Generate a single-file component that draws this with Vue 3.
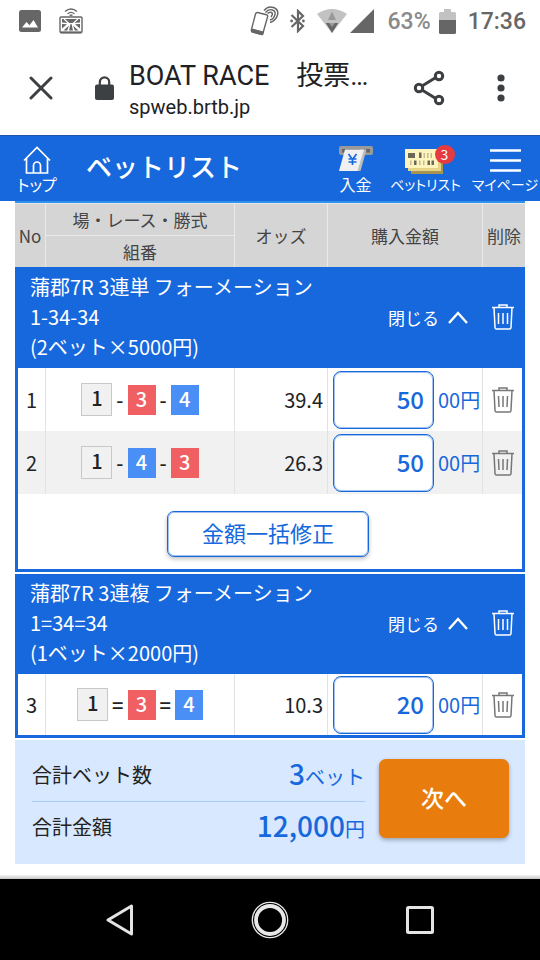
<script setup>
import { ref, computed } from 'vue'

const groups = ref([
  {
    id: 'g1',
    title: '蒲郡7R 3連単 フォーメーション',
    pattern: '1-34-34',
    summary: '(2ベット×5000円)',
    separator: '-',
    bulkEdit: true,
    open: true,
    bets: [
      { no: 1, boats: [1, 3, 4], odds: '39.4', amount: '50' },
      { no: 2, boats: [1, 4, 3], odds: '26.3', amount: '50' },
    ],
  },
  {
    id: 'g2',
    title: '蒲郡7R 3連複 フォーメーション',
    pattern: '1=34=34',
    summary: '(1ベット×2000円)',
    separator: '=',
    bulkEdit: false,
    open: true,
    bets: [{ no: 3, boats: [1, 3, 4], odds: '10.3', amount: '20' }],
  },
])

const allBets = computed(() => groups.value.flatMap((g) => g.bets))
const betCount = computed(() => allBets.value.length)
const total = computed(() =>
  allBets.value.reduce((sum, b) => sum + (Number(b.amount) || 0) * 100, 0).toLocaleString('en-US')
)

function removeGroup(id) {
  groups.value = groups.value.filter((g) => g.id !== id)
}

function removeBet(group, no) {
  group.bets = group.bets.filter((b) => b.no !== no)
}
</script>

<template>
  <div class="screen">
    <div class="status">
      <div class="status-left">
        <svg width="22" height="22" viewBox="0 0 22 22">
          <rect width="22" height="22" rx="2.500" fill="#666" />
          <path d="M3 17.500L7.500 12l3 3.200L14.500 10 19 17.500z" fill="#fff" />
        </svg>
        <svg width="24" height="26" viewBox="0 0 24 26" fill="none" stroke="#666">
          <path d="M6 3.500Q12-1.500 18 3.500M8.500 5.700Q12 3 15.500 5.700" stroke-width="1.400" />
          <path d="M10.500 7.200h3" stroke-width="1.400" />
          <rect x="1" y="9" width="22" height="15.500" rx="1" stroke-width="1.400" />
          <path d="M3 11h18v3.500L14.500 15h-5L3 14.500z" fill="#666" stroke="none" />
          <path d="M3 16l5 .3L3 20.500zM21 16l-5 .3 5 4.200zM11.500 16h1l1.500 6.500h-4zM4.500 22.500l5.500-5-1.800 5zM19.500 22.500l-5.500-5 1.800 5z" fill="#666" stroke="none" />
          <path d="M5 11l5 4.500M19 11l-5 4.500" stroke="#fff" stroke-width="1.100" />
          <path d="M1.500 24.500h21" stroke-width="2" />
        </svg>
      </div>
      <div class="status-right">
        <svg width="29" height="32" viewBox="0 0 29 32" fill="none" stroke="#666">
          <path d="M7.500 7.500l9 2.200q1.500.5 1.100 2L13 28q-.5 1.500-2 1.100l-8.500-2.200q-1.500-.5-1.100-2L5.500 9q.5-1.700 2-1.500z" stroke-width="1.400" />
          <path d="M2 24l11.500 3-1 3-11-3z" fill="#666" />
          <path d="M14 5.500Q18 .5 23.500 2.500T27.500 10 20 17.500M15.500 7.500Q18.500 3.500 22.500 5T24.500 11 20 14.500M17.500 8.500Q19.500 6.500 21.500 7.500T21 12" stroke-width="1.400" />
        </svg>
        <svg class="i-bt" width="15" height="24" viewBox="0 0 15 24" fill="none" stroke="#666" stroke-width="2.200">
          <path d="M1.500 6L13 17l-5 5V2l5 5L1.500 18" />
          <circle cx="1.600" cy="12" r="1.400" fill="#666" stroke="none" />
          <circle cx="13.400" cy="12" r="1.400" fill="#666" stroke="none" />
        </svg>
        <svg class="i-wifi" width="30" height="24" viewBox="0 0 30 24">
          <path d="M0 5Q15-5 30 5L15 24z" fill="#c2c2c2" />
          <path d="M8.800 14h12.400L15 24z" fill="#666" />
          <path d="M15 2.500l4 8.500h-8z" fill="#999" />
          <path d="M12 14h6l-3 4z" fill="#999" />
        </svg>
        <svg class="i-signal" width="24" height="24" viewBox="0 0 24 24"><path d="M24 0v24H0z" fill="#666" /></svg>
        <span class="percent">63%</span>
        <svg width="17" height="25" viewBox="0 0 17 25">
          <path d="M5 0h7v3h3.500q1.500 0 1.500 1.500V12H0V4.500Q0 3 1.500 3H5z" fill="#c2c2c2" />
          <path d="M0 11h17v12.500q0 1.500-1.500 1.500h-14Q0 25 0 23.500z" fill="#666" />
        </svg>
        <span class="clock">17:36</span>
      </div>
    </div>

    <div class="browser">
      <button class="plain" aria-label="閉じる">
        <svg width="24" height="24" viewBox="0 0 24 24" stroke="#3c4043" stroke-width="3" stroke-linecap="round"><path d="M2 2l20 20M22 2L2 22" /></svg>
      </button>
      <svg class="lock" width="19" height="24" viewBox="0 0 19 24">
        <path d="M4.800 10V6a4.700 4.700 0 0 1 9.400 0v4" fill="none" stroke="#3c4043" stroke-width="2.200" />
        <rect y="8.500" width="19" height="15.500" rx="2" fill="#3c4043" />
      </svg>
      <div class="page-id">
        <div class="page-title">BOAT RACE　投票…</div>
        <div class="page-url">spweb.brtb.jp</div>
      </div>
      <button class="plain share" aria-label="共有">
        <svg width="32" height="36" viewBox="0 0 32 36" fill="none" stroke="#3c4043" stroke-width="3">
          <path d="M9 16L22 8M9 20l13 8" />
          <circle cx="6" cy="18" r="3.700" /><circle cx="26" cy="6" r="3.700" /><circle cx="26" cy="30" r="3.700" />
        </svg>
      </button>
      <button class="plain" aria-label="メニュー">
        <svg width="8" height="28" viewBox="0 0 8 28" fill="#3c4043">
          <circle cx="4" cy="4" r="3.600" /><circle cx="4" cy="14" r="3.600" /><circle cx="4" cy="24" r="3.600" />
        </svg>
      </button>
    </div>

    <header class="app-bar">
      <a class="nav-item home" href="#top">
        <svg width="28" height="28" viewBox="0 0 28 28" fill="none" stroke="#fff" stroke-width="1.700">
          <path d="M1 14.500L14 1.500l13 13M3.500 12.500V27h21V12.500M10.500 27v-7.500a3.500 3.500 0 0 1 7 0V27" />
        </svg>
        <span>トップ</span>
      </a>
      <h1>ベットリスト</h1>
      <a class="nav-item deposit" href="#deposit">
        <svg width="34" height="28" viewBox="0 0 34 28">
          <rect width="34" height="9" rx="2" fill="#9a9a9a" />
          <rect x="3" y="3" width="28" height="3.500" fill="#666" />
          <path d="M21 3.500h6.500L21.500 25h-5z" fill="#bdbdbd" />
          <path d="M6 3.500h19L18.500 25H0z" fill="#f0f0f0" />
          <path d="M9.500 8l4 5.500 4-5.500M13.500 13.500V19M9.500 13h8M9.500 16h8" stroke="#1768dc" stroke-width="1.700" fill="none" />
        </svg>
        <span>入金</span>
      </a>
      <a class="nav-item small bets" href="#bets">
        <span class="bets-icon">
          <svg width="38" height="25" viewBox="0 0 38 25">
            <path d="M6 3h32v22H6z" fill="#a9954f" />
            <path d="M3 2h33v20H3z" fill="#e5d387" />
            <path d="M0 0h33v19H0z" fill="#fff4bd" />
            <g fill="#6b675b">
              <path d="M3 4h7v5H3zM14 3.500h2.500v5.500H14zM9 11.500h2.500v4.500H9zM22.500 11.500H25v4.500h-2.500zM26.500 11.500H29v4.500h-2.500z" />
              <path d="M18.500 4h1.500v5h-1.500zM22 4h1.500v5H22zM25.500 4H27v5h-1.500zM5 11.500h1.500v4.500H5zM14 11.500h1.500v4.500H14zM18 11.500h1.500v4.500H18z" opacity=".4" />
            </g>
          </svg>
          <span class="badge">{{ betCount }}</span>
        </span>
        <span>ベットリスト</span>
      </a>
      <a class="nav-item small mypage" href="#mypage">
        <svg width="31" height="28" viewBox="0 0 31 28" stroke="#fff" stroke-width="2.400"><path d="M0 4.500h31M0 14.500h31M0 24.500h31" /></svg>
        <span>マイページ</span>
      </a>
    </header>

    <main>
      <table class="head">
        <colgroup><col class="c-no-head" /><col /><col class="c-odds" /><col class="c-amount" /><col class="c-del-head" /></colgroup>
        <thead>
          <tr>
            <th rowspan="2">No</th>
            <th>場・レース・勝式</th>
            <th rowspan="2">オッズ</th>
            <th rowspan="2">購入金額</th>
            <th rowspan="2">削除</th>
          </tr>
          <tr><th class="sub">組番</th></tr>
        </thead>
      </table>

      <section v-for="group in groups" :key="group.id" class="group" :class="{ short: !group.bulkEdit }">
        <div class="group-head">
          <h2>{{ group.title }}<br />{{ group.pattern }}<br />{{ group.summary }}</h2>
          <button class="plain toggle" @click="group.open = !group.open">
            <span>{{ group.open ? '閉じる' : '開く' }}</span>
            <svg width="20" height="13" viewBox="0 0 20 13" fill="none" stroke="#fff" stroke-width="2.400"><path d="M1 12l9-10 9 10" /></svg>
          </button>
          <button class="plain trash" aria-label="削除" @click="removeGroup(group.id)">
            <svg width="22" height="26" viewBox="0 0 22 26"><path d="M0 3.500h22M7 3.500V1h8v2.500M2 3.500l1 20q.1 1.500 1.500 1.500h13q1.400 0 1.500-1.500L20 3.500M6.500 9v11M11 9v11M15.500 9v11" /></svg>
          </button>
        </div>
        <table v-if="group.open">
          <colgroup><col class="c-no" /><col /><col class="c-odds" /><col class="c-amount" /><col class="c-del" /></colgroup>
          <tbody>
            <tr v-for="bet in group.bets" :key="bet.no">
              <td class="no">{{ bet.no }}</td>
              <td>
                <div class="combo">
                  <template v-for="(boat, i) in bet.boats" :key="boat">
                    <span v-if="i > 0">{{ group.separator }}</span>
                    <b :class="'boat b' + boat">{{ boat }}</b>
                  </template>
                </div>
              </td>
              <td class="odds">{{ bet.odds }}</td>
              <td>
                <label class="amount">
                  <input v-model="bet.amount" type="text" inputmode="numeric" />
                  <span>00円</span>
                </label>
              </td>
              <td>
                <button class="plain trash dark" aria-label="削除" @click="removeBet(group, bet.no)">
                  <svg width="22" height="26" viewBox="0 0 22 26"><path d="M0 3.500h22M7 3.500V1h8v2.500M2 3.500l1 20q.1 1.500 1.500 1.500h13q1.400 0 1.500-1.500L20 3.500M6.500 9l.5 11M11 9v11M15.500 9L15 20" /></svg>
                </button>
              </td>
            </tr>
          </tbody>
        </table>
        <div v-if="group.bulkEdit" class="bulk"><button>金額一括修正</button></div>
      </section>

      <section class="totals">
        <dl>
          <div><dt>合計ベット数</dt><dd><strong>{{ betCount }}</strong>ベット</dd></div>
          <div><dt>合計金額</dt><dd><strong>{{ total }}</strong>円</dd></div>
        </dl>
        <button class="next">次へ</button>
      </section>
    </main>

    <nav class="system">
      <button class="plain" aria-label="戻る">
        <svg width="28" height="32" viewBox="0 0 28 32" fill="none" stroke="#e4e4e4" stroke-width="3" stroke-linejoin="round"><path d="M25.500 2v28L2 16z" /></svg>
      </button>
      <button class="plain" aria-label="ホーム">
        <svg width="38" height="38" viewBox="0 0 38 38" fill="none" stroke="#e8e8e8">
          <circle cx="19" cy="19" r="17.700" stroke-width="1.300" /><circle cx="19" cy="19" r="14" stroke-width="3.800" />
        </svg>
      </button>
      <button class="plain" aria-label="履歴">
        <svg width="28" height="28" viewBox="0 0 28 28" fill="none" stroke="#e4e4e4" stroke-width="3"><rect x="1.500" y="1.500" width="25" height="25" rx="1" /></svg>
      </button>
    </nav>
  </div>
</template>

<style>
body {
  margin: 0;
  background: #fff;
}
</style>

<style scoped>
.screen {
  display: flex;
  flex-direction: column;
  min-height: 100vh;
  font-family: "Noto Sans CJK JP", "Noto Sans", sans-serif;
  font-size: 20px;
  color: #222;
}
.screen * {
  box-sizing: border-box;
}
svg {
  display: block;
  flex: none;
}
button,
input {
  font: inherit;
}
.plain {
  display: flex;
  align-items: center;
  justify-content: center;
  padding: 0;
  border: 0;
  background: none;
  color: inherit;
}

.status {
  display: flex;
  justify-content: space-between;
  height: 42px;
  padding: 0 14px 0 19px;
  font-family: Roboto, sans-serif;
  font-size: 23px;
  font-weight: 500;
}
.status-left,
.status-right {
  display: flex;
  align-items: center;
}
.status-left {
  gap: 18px;
}
.i-bt {
  margin-left: 11px;
}
.i-wifi {
  margin-left: 12px;
}
.i-signal {
  margin-left: 3px;
}
.percent {
  margin: 0 8px 0 14px;
  color: #8a8a8a;
}
.clock {
  margin-left: 12px;
  color: #666;
}

.browser {
  display: flex;
  align-items: center;
  height: 93px;
  padding: 0 35px 2px 29px;
  font-family: Roboto, "Noto Sans CJK JP", sans-serif;
  color: #202124;
}
.lock {
  margin: 0 15px 0 42px;
}
.page-id {
  flex: 1;
  min-width: 0;
  padding-top: 5px;
}
.page-title {
  overflow: hidden;
  font-size: 27px;
  line-height: 34px;
  white-space: nowrap;
}
.page-url {
  line-height: 28px;
}
.share {
  margin-right: 52px;
}

.app-bar {
  display: flex;
  align-items: flex-start;
  height: 66px;
  border-top: 1px solid #1d58a8;
  padding-top: 10px;
  background: #1768dc;
  color: #fff;
}
.nav-item {
  display: flex;
  flex-direction: column;
  align-items: center;
  flex: none;
  color: #fff;
  font-size: 16px;
  line-height: 20px;
  font-feature-settings: "palt";
  text-decoration: none;
  white-space: nowrap;
}
.small {
  font-size: 14px;
}
.home {
  width: 74px;
}
.deposit {
  width: 51px;
}
.bets {
  width: 89px;
}
.mypage {
  width: 70px;
}
h1 {
  flex: 1;
  margin: 0;
  padding-left: 12px;
  font-size: 26px;
  font-weight: 500;
  line-height: 40px;
}
.bets-icon {
  position: relative;
  height: 28px;
  padding: 3px 4px 0 0;
}
.badge {
  position: absolute;
  top: -1px;
  right: -8px;
  width: 20px;
  height: 19px;
  border-radius: 10px;
  background: #e53a3e;
  line-height: 18px;
  text-align: center;
}

main {
  flex: 1;
  padding: 0 15px 11px;
}
table {
  width: 100%;
  border-collapse: separate;
  border-spacing: 0;
  table-layout: fixed;
}
th,
td {
  padding: 0;
  border-left: 1px solid #e2e2e2;
}
th:first-child:not(.sub),
td:first-child {
  border-left: 0;
}
.c-no-head {
  width: 30px;
}
.c-no {
  width: 27px;
}
.c-odds {
  width: 93px;
}
.c-amount {
  width: 155px;
}
.c-del-head {
  width: 43px;
}
.c-del {
  width: 40px;
}
.head {
  border-top: 2px solid #2f93ee;
  border-bottom: 1px solid #1768dc;
  background: #d5d5d5;
  color: #444;
}
.head th {
  height: 32px;
  border-top: 1px solid #e9e9e9;
  border-left-color: #e9e9e9;
  font-size: 17px;
  font-weight: 400;
  line-height: 20px;
}

.group {
  margin-bottom: 2px;
  border: 3px solid #1768dc;
  border-top: 0;
}
.group-head {
  display: flex;
  align-items: center;
  padding: 4px 0 6px 12px;
  background: #1768dc;
  color: #fff;
}
h2 {
  flex: 1;
  margin: 0;
  font-size: 20px;
  font-weight: 400;
  line-height: 30px;
}
.toggle {
  gap: 9px;
  margin-right: 16px;
  font-size: 17px;
}
.trash {
  width: 38px;
  height: 32px;
}
.trash path {
  fill: none;
  stroke: #fff;
  stroke-width: 1.5;
}
.trash.dark {
  width: 100%;
}
.trash.dark path {
  stroke: #777;
}
td {
  height: 63px;
}
.short td {
  height: 61px;
}
tr:nth-child(even) td {
  background: #f1f1f1;
}
.no {
  text-align: center;
}
.combo {
  display: flex;
  align-items: center;
  justify-content: center;
  gap: 4px;
}
.combo span {
  font-weight: 500;
  line-height: 28px;
}
.boat {
  width: 28px;
  height: 30px;
  color: #fff;
  font-weight: 500;
  line-height: 28px;
  text-align: center;
}
.b1 {
  width: 31px;
  height: 33px;
  border: 1px solid #c8c8c8;
  background: #f1f1f1;
  color: #222;
}
.b3 {
  background: #f06062;
}
.b4 {
  background: #4a8ff5;
}
.odds {
  padding-right: 4px;
  text-align: right;
}
.amount {
  display: flex;
  align-items: center;
  gap: 4px;
  padding-left: 5px;
  color: #1768dc;
}
.amount input {
  width: 101px;
  height: 58px;
  padding: 0 9px 2px;
  border: 1px solid #1768dc;
  border-radius: 8px;
  background: #fff;
  box-shadow: inset 0 0 0 1px rgba(23, 104, 220, 0.4);
  color: #1768dc;
  font-size: 24px;
  font-weight: 500;
  text-align: right;
}
.bulk {
  display: flex;
  justify-content: center;
  padding: 17px 4px 12px 0;
}
.bulk button {
  width: 202px;
  height: 46px;
  padding: 0 0 4px;
  border: 1px solid #1768dc;
  border-radius: 7px;
  background: #fff;
  box-shadow: inset 0 0 0 1px rgba(23, 104, 220, 0.4), 0 2px 4px rgba(0, 0, 0, 0.25);
  color: #1768dc;
  font-size: 22px;
  line-height: 40px;
}

.totals {
  display: flex;
  gap: 14px;
  padding: 8px 16px 13px 17px;
  background: #d8e8fe;
}
dl {
  flex: 1;
  margin: 0;
}
dl div {
  display: flex;
  align-items: center;
  justify-content: space-between;
  height: 53px;
}
dl div + div {
  height: 50px;
  border-top: 1px solid #a9cbf8;
}
dd {
  margin: 0;
  color: #1768dc;
  line-height: 40px;
}
dd strong {
  font-size: 28px;
  font-weight: 500;
}
.next {
  width: 130px;
  height: 79px;
  margin-top: 11px;
  padding: 0 0 4px;
  border: 0;
  border-radius: 7px;
  background: #e87c0c;
  box-shadow: 0 2px 4px rgba(0, 0, 0, 0.3);
  color: #fff;
  font-size: 23px;
  font-weight: 500;
}

.system {
  display: grid;
  grid-template-columns: repeat(3, 1fr);
  align-items: center;
  height: 85px;
  padding: 4px 45px 0;
  background: linear-gradient(#f4f4f4, #c4c4c4) 0 0 / 100% 4px no-repeat, #000;
}
</style>
